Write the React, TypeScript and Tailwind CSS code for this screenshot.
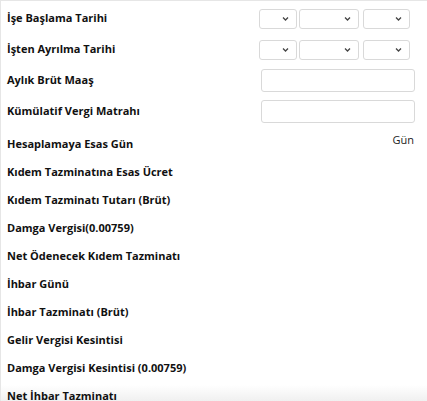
import React from "react";

const Chevron = () => (
  <svg width="7" height="5" viewBox="0 0 7 5" className="absolute right-[7px] top-1/2 -translate-y-1/2">
    <path d="M1 1 L3.5 3.5 L6 1" fill="none" stroke="#444" strokeWidth="1.3" />
  </svg>
);

const Sel = ({ w }: { w: string }) => (
  <div className={`relative h-[20px] ${w} rounded-[3px] border border-[#d9d9d9] bg-white`}>
    <Chevron />
  </div>
);

const DateRow = ({ label }: { label: string }) => (
  <div className="flex h-[31px] items-center justify-between">
    <span>{label}</span>
    <div className="mr-[17px] flex gap-[2px]">
      <Sel w="w-[38px]" />
      <div className="mr-[2px]"><Sel w="w-[60px]" /></div>
      <Sel w="w-[47px]" />
    </div>
  </div>
);

const InputRow = ({ label }: { label: string }) => (
  <div className="flex h-[31px] items-center justify-between">
    <span>{label}</span>
    <div className="mr-[12px] h-[23px] w-[154px] rounded-[3px] border border-[#d9d9d9] bg-white" />
  </div>
);

const rows = [
  "Kıdem Tazminatına Esas Ücret",
  "Kıdem Tazminatı Tutarı (Brüt)",
  "Damga Vergisi(0.00759)",
  "Net Ödenecek Kıdem Tazminatı",
  "İhbar Günü",
  "İhbar Tazminatı (Brüt)",
  "Gelir Vergisi Kesintisi",
  "Damga Vergisi Kesintisi (0.00759)",
  "Net İhbar Tazminatı",
];

export default function App() {
  return (
    <div
      className="relative h-[401px] w-[427px] overflow-hidden bg-white text-[11px] font-bold text-[#111]"
      style={{ fontFamily: '"Open Sans", "Noto Sans", sans-serif' }}
    >
      <div className="absolute bottom-0 left-0 right-0 h-[16px] bg-gradient-to-b from-white to-[#f0f0f0]" />
      <div className="relative h-full border-l border-t border-[#e6e6e6] pl-[6px] pt-[2px]">
        <DateRow label="İşe Başlama Tarihi" />
        <DateRow label="İşten Ayrılma Tarihi" />
        <InputRow label="Aylık Brüt Maaş" />
        <InputRow label="Kümülatif Vergi Matrahı" />
        <div className="mt-[3px] flex h-[28px] items-center justify-between">
          <span>Hesaplamaya Esas Gün</span>
          <span className="mr-[13px] -translate-y-[4px] font-normal text-[#222]">Gün</span>
        </div>
        {rows.map((r) => (
          <div key={r} className="flex h-[28px] items-center">
            <span>{r}</span>
          </div>
        ))}
      </div>
    </div>
  );
}
